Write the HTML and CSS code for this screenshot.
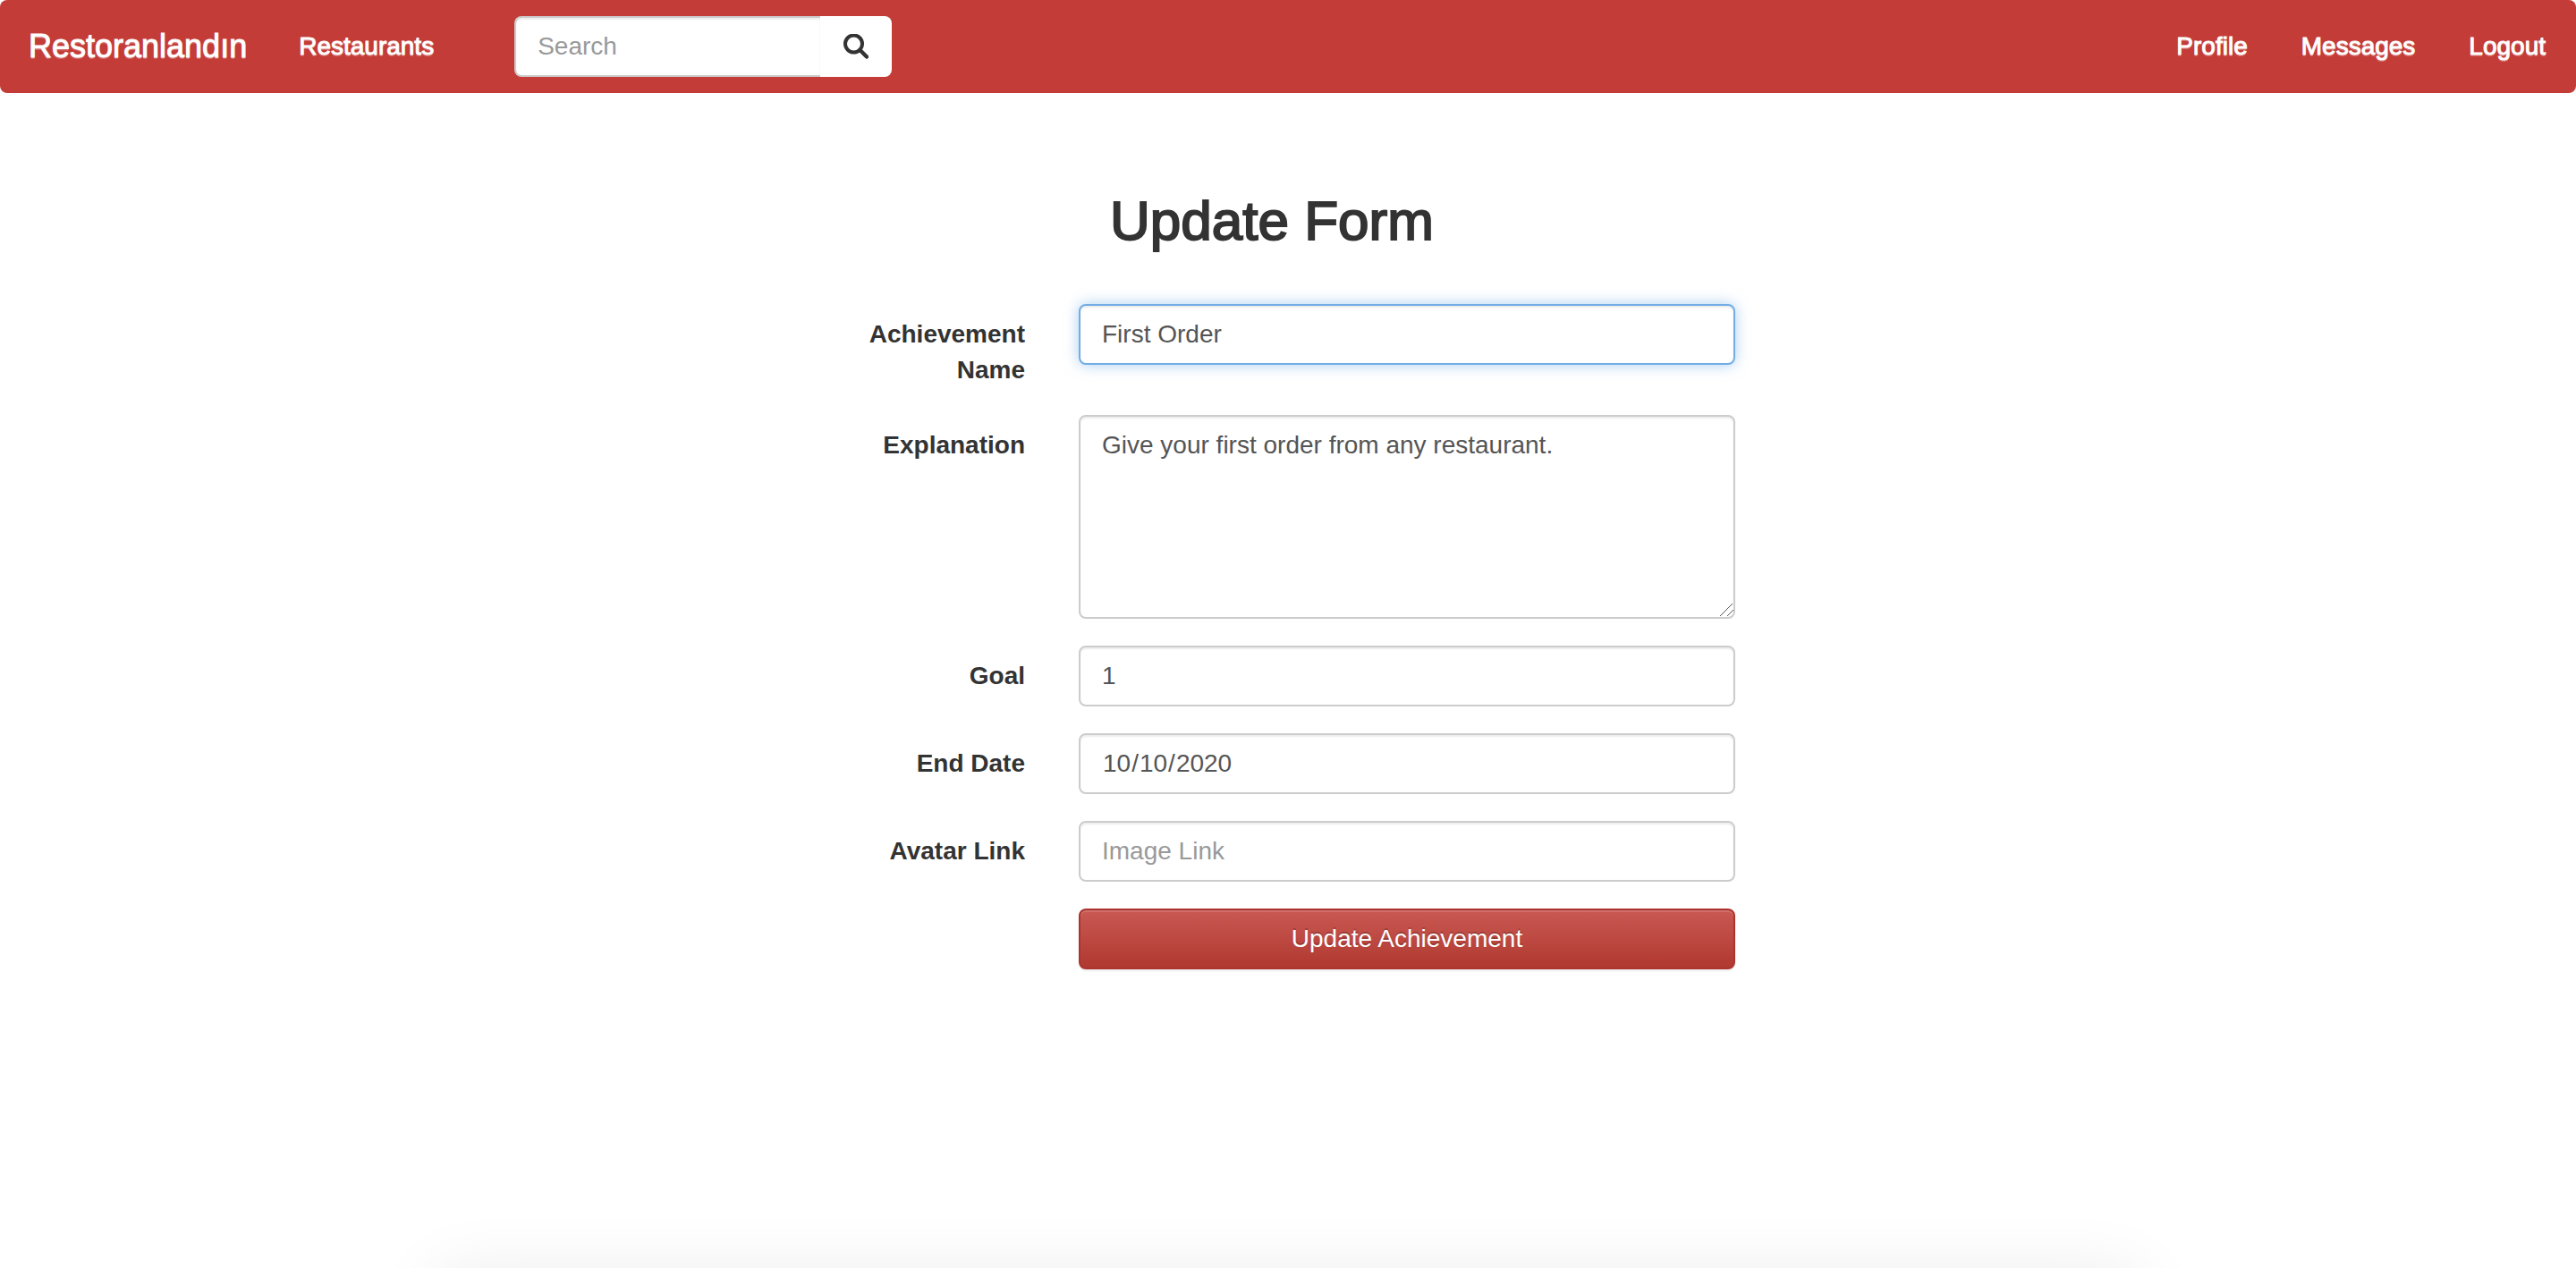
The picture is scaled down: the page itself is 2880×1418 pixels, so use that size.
FILE: index.html
```html
<!DOCTYPE html>
<html lang="en">
<head>
  <meta charset="utf-8">
  <meta name="viewport" content="width=device-width, initial-scale=1">
  <title>Restoranlandın</title>
  <link rel="stylesheet" href="styles.css">
</head>
<body>
  <nav class="navbar">
    <a class="navbar-brand" href="#">Restoranlandın</a>
    <a class="nav-link" href="#">Restaurants</a>
    <form class="search" role="search">
      <input class="form-control search-input" type="text" placeholder="Search" aria-label="Search">
      <button class="search-button" type="button" aria-label="Search">
        <svg class="search-icon" viewBox="0 0 56 56" aria-hidden="true">
          <circle cx="23" cy="22" r="19" fill="none" stroke="currentColor" stroke-width="8"/>
          <path d="M37 36L52 51" stroke="currentColor" stroke-width="9" stroke-linecap="round"/>
        </svg>
      </button>
    </form>
    <div class="nav-right">
      <a class="nav-link" href="#">Profile</a>
      <a class="nav-link" href="#">Messages</a>
      <a class="nav-link" href="#">Logout</a>
    </div>
  </nav>

  <main class="container">
    <h2 class="title">Update Form</h2>
    <form class="update-form">
      <label class="form-label" for="name">Achievement Name</label>
      <input class="form-control" id="name" type="text" value="First Order" autofocus>

      <label class="form-label" for="explanation">Explanation</label>
      <textarea class="form-control form-textarea" id="explanation">Give your first order from any restaurant.</textarea>

      <label class="form-label" for="goal">Goal</label>
      <input class="form-control" id="goal" type="text" value="1">

      <label class="form-label" for="end-date">End Date</label>
      <input class="form-control" id="end-date" type="date" value="2020-10-10">

      <label class="form-label" for="avatar">Avatar Link</label>
      <input class="form-control" id="avatar" type="text" placeholder="Image Link">

      <button class="submit-button" type="submit">Update Achievement</button>
    </form>
  </main>

  <footer class="page-end"></footer>
</body>
</html>
```

FILE: styles.css
```css
* {
  box-sizing: border-box;
}

body {
  display: flex;
  flex-direction: column;
  min-height: 100vh;
  margin: 0;
  background: #fff;
  color: #333;
  font-family: "Liberation Sans", Arial, sans-serif;
  font-size: 28px;
  line-height: 40px;
}

input,
textarea,
button {
  font: inherit;
}

/* Navigation bar */
.navbar {
  display: flex;
  align-items: center;
  padding: 18px 34px 18px 32px;
  border-radius: 8px;
  background: #c43c38;
}

.navbar-brand,
.nav-link {
  color: #fff;
  text-decoration: none;
  text-shadow: 0 2px 0 rgba(255, 255, 255, 0.25);
  -webkit-text-stroke: 1px #fff;
}

.navbar-brand {
  margin-right: 58px;
  font-size: 36px;
}

.nav-right {
  display: flex;
  gap: 60px;
  margin-left: auto;
}

.search {
  display: flex;
  margin-left: 90px;
}

.search-button {
  display: flex;
  align-items: center;
  justify-content: center;
  width: 80px;
  padding: 0;
  border: 0;
  border-radius: 0 8px 8px 0;
  background: #fff;
  color: #333;
}

.search-icon {
  width: 28px;
  height: 28px;
}

/* Form */
.container {
  width: 100%;
  max-width: 1060px;
  margin: 0 auto;
  padding: 110px 30px 60px;
}

.title {
  margin: 0 0 60px;
  padding-right: 36px;
  font-size: 62px;
  font-weight: 500;
  line-height: 66px;
  text-align: center;
  -webkit-text-stroke: 2px #333;
}

.update-form {
  display: grid;
  grid-template-columns: 206px 1fr;
  gap: 30px 60px;
  align-items: start;
}

.form-label {
  padding-top: 14px;
  font-weight: 700;
  text-align: right;
}

.form-control {
  display: block;
  width: 100%;
  height: 68px;
  margin: 0;
  padding: 12px 24px;
  border: 2px solid #ccc;
  border-radius: 8px;
  outline: 0;
  background: #fff;
  box-shadow: inset 0 2px 2px rgba(0, 0, 0, 0.075);
  color: #555;
}

.form-control:focus {
  border-color: #72ade6;
  box-shadow: inset 0 2px 2px rgba(0, 0, 0, 0.075), 0 0 16px rgba(114, 173, 230, 0.6);
}

.form-control::placeholder {
  color: #999;
}

.form-control::-webkit-calendar-picker-indicator {
  display: none;
}

.search-input {
  width: 342px;
  border-right: 0;
  border-radius: 8px 0 0 8px;
}

.form-textarea {
  height: 228px;
  resize: vertical;
}

.form-textarea::-webkit-resizer {
  background: url("data:image/svg+xml,%3Csvg xmlns='http://www.w3.org/2000/svg' viewBox='0 0 15 15'%3E%3Cpath d='M0 14L14 0M8 14L15 7' stroke='%23555' stroke-width='1'/%3E%3C/svg%3E") no-repeat;
}

.submit-button {
  grid-column: 2;
  height: 68px;
  padding: 12px 24px;
  border: 2px solid #ab342f;
  border-radius: 8px;
  background: linear-gradient(#ca5a54, #af382f);
  background-origin: border-box;
  box-shadow: inset 0 2px 0 rgba(255, 255, 255, 0.15), 0 2px 2px rgba(0, 0, 0, 0.075);
  color: #fff;
  text-shadow: 0 -2px 0 rgba(0, 0, 0, 0.2);
}

/* Soft shade rising from the bottom edge */
.page-end {
  position: relative;
  height: 100px;
  margin-top: auto;
  overflow: hidden;
}

.page-end::after {
  content: "";
  position: absolute;
  top: 100%;
  left: 17%;
  right: 17%;
  height: 100px;
  box-shadow: 0 10px 80px rgba(0, 0, 0, 0.09);
}
```
